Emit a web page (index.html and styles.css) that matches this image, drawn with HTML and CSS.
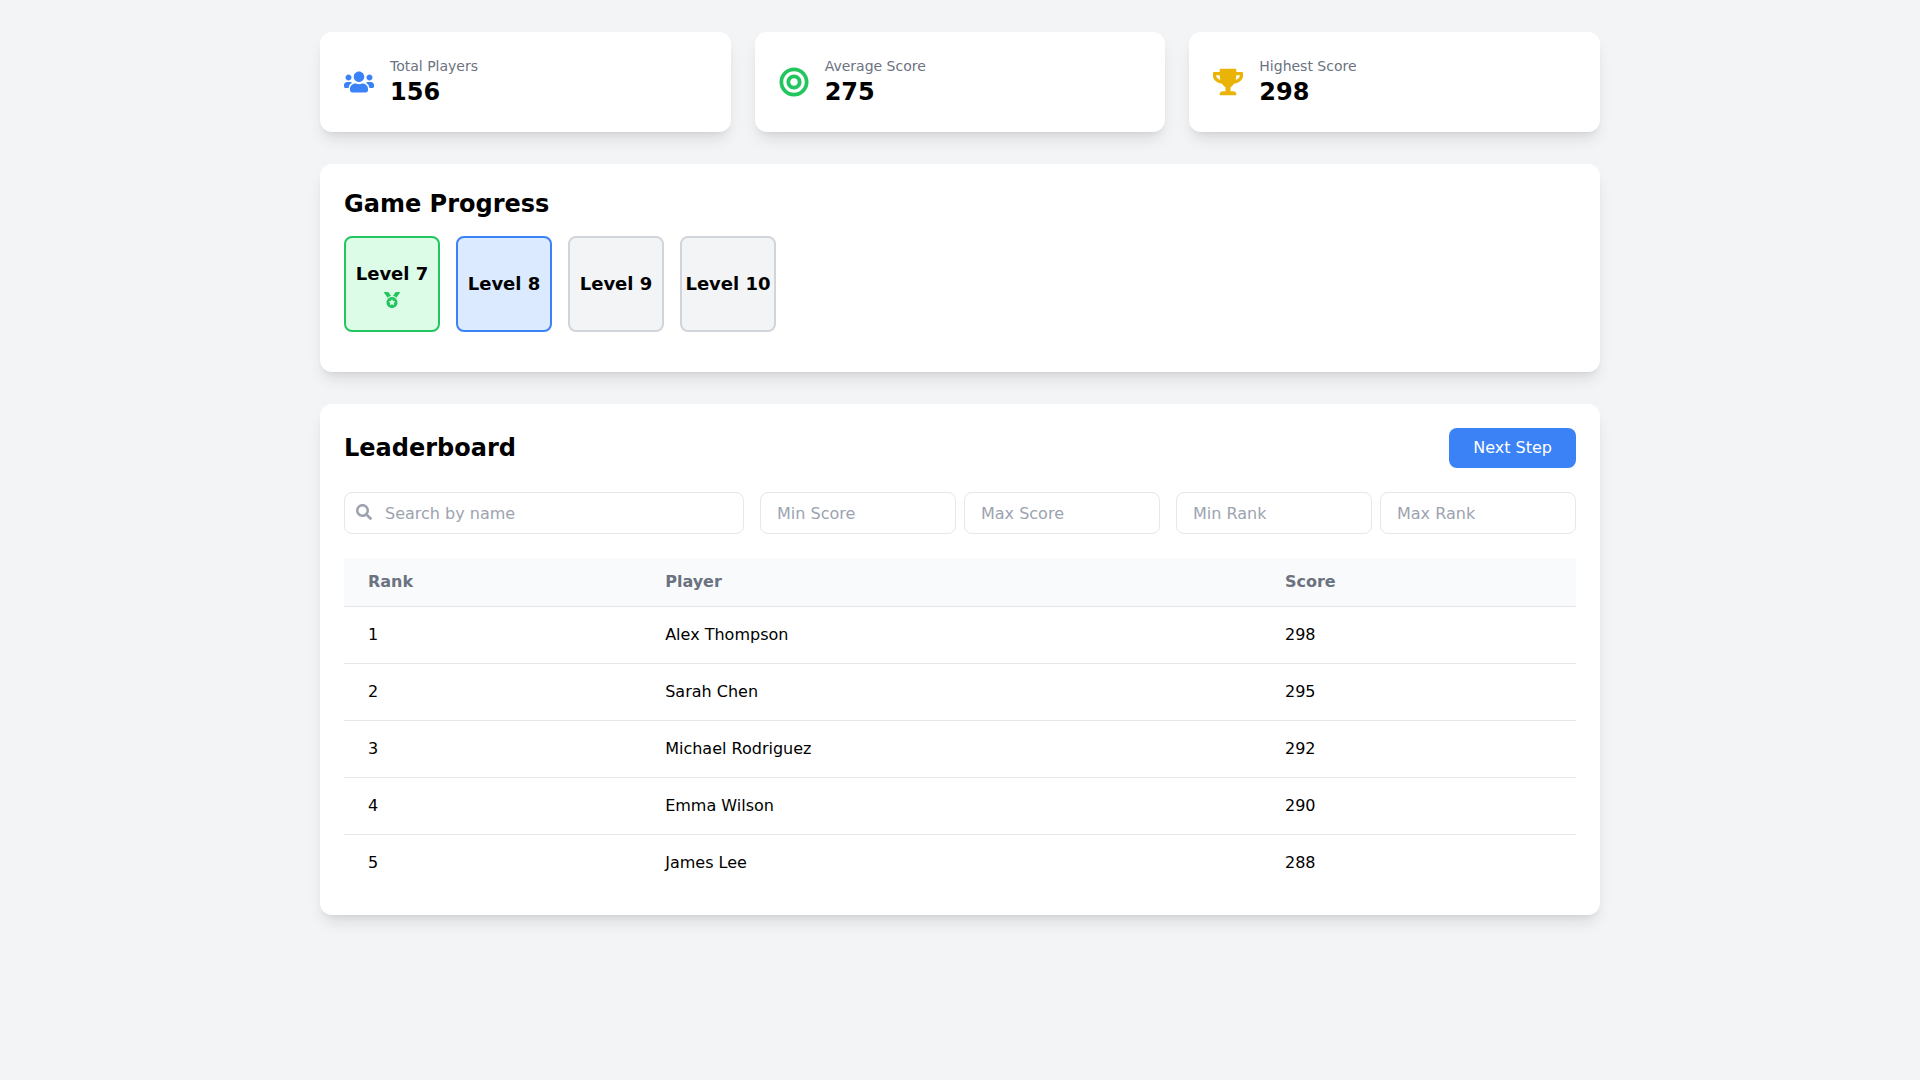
FILE: index.html
```html
<!DOCTYPE html>
<html lang="en">
<head>
  <meta charset="UTF-8">
  <meta name="viewport" content="width=device-width, initial-scale=1.0">
  <title>Leaderboard</title>
  <link rel="stylesheet" href="styles.css">
</head>
<body>
  <main class="container">
    <!-- Stats -->
    <section class="stats">
      <div class="card stat">
        <svg class="stat-icon blue" viewBox="0 0 640 512" aria-hidden="true"><path d="M96 224c35.3 0 64-28.7 64-64s-28.7-64-64-64-64 28.7-64 64 28.7 64 64 64zm448 0c35.3 0 64-28.7 64-64s-28.7-64-64-64-64 28.7-64 64 28.7 64 64 64zm32 32h-64c-17.6 0-33.5 7.1-45.1 18.6 40.3 22.1 68.9 62 75.1 109.4h66c17.7 0 32-14.3 32-32v-32c0-35.3-28.7-64-64-64zm-256 0c61.9 0 112-50.1 112-112S381.9 32 320 32 208 82.1 208 144s50.1 112 112 112zm76.8 32h-8.3c-20.8 10-43.9 16-68.5 16s-47.6-6-68.5-16h-8.3C179.6 288 128 339.6 128 403.2V432c0 26.5 21.5 48 48 48h288c26.5 0 48-21.5 48-48v-28.8c0-63.6-51.6-115.2-115.2-115.2zm-223.7-13.4C161.5 263.1 145.6 256 128 256H64c-35.3 0-64 28.7-64 64v32c0 17.7 14.3 32 32 32h65.9c6.3-47.4 34.9-87.3 75.2-109.4z"/></svg>
        <div>
          <p class="stat-label">Total Players</p>
          <p class="stat-value">156</p>
        </div>
      </div>
      <div class="card stat">
        <svg class="stat-icon green" viewBox="0 0 496 512" aria-hidden="true"><path d="M248 8C111.03 8 0 119.03 0 256s111.03 248 248 248 248-111.03 248-248S384.97 8 248 8zm0 432c-101.69 0-184-82.29-184-184 0-101.69 82.29-184 184-184 101.69 0 184 82.29 184 184 0 101.69-82.29 184-184 184zm0-312c-70.69 0-128 57.31-128 128s57.31 128 128 128 128-57.31 128-128-57.31-128-128-128zm0 192c-35.29 0-64-28.71-64-64s28.71-64 64-64 64 28.71 64 64-28.71 64-64 64z"/></svg>
        <div>
          <p class="stat-label">Average Score</p>
          <p class="stat-value">275</p>
        </div>
      </div>
      <div class="card stat">
        <svg class="stat-icon yellow" viewBox="0 0 576 512" aria-hidden="true"><path d="M552 64H448V24c0-13.3-10.7-24-24-24H152c-13.3 0-24 10.7-24 24v40H24C10.7 64 0 74.7 0 88v56c0 35.7 22.5 72.4 61.9 100.7 31.5 22.7 69.8 37.1 110 41.7C203.3 338.5 240 360 240 360v72h-48c-35.3 0-64 20.7-64 56v12c0 6.6 5.4 12 12 12h296c6.6 0 12-5.4 12-12v-12c0-35.3-28.7-56-64-56h-48v-72s36.7-21.5 68.1-73.6c40.3-4.6 78.6-19 110-41.7 39.3-28.3 61.9-65 61.9-100.7V88c0-13.3-10.7-24-24-24zM99.3 192.8C74.9 175.2 64 155.6 64 144v-16h64.2c1 32.6 5.8 61.2 12.8 86.2-15.1-5.2-29.2-12.4-41.7-21.4zM512 144c0 16.1-17.7 36.1-35.3 48.8-12.5 9-26.7 16.2-41.8 21.4 7-25 11.8-53.6 12.8-86.2H512v16z"/></svg>
        <div>
          <p class="stat-label">Highest Score</p>
          <p class="stat-value">298</p>
        </div>
      </div>
    </section>

    <!-- Game progress -->
    <section class="card">
      <h2 class="progress-title">Game Progress</h2>
      <div class="levels">
        <div class="level done">
          <span>Level 7</span>
          <svg class="medal" viewBox="0 0 512 512" aria-hidden="true"><path d="M223.75 130.75L154.62 15.54A31.997 31.997 0 0 0 127.18 0H16.03C3.08 0-4.5 14.57 2.92 25.18l111.27 158.96c29.72-27.77 67.52-46.83 109.56-53.39zM495.97 0H384.82c-11.24 0-21.66 5.9-27.44 15.54l-69.13 115.21c42.04 6.56 79.84 25.62 109.56 53.38L509.08 25.18C516.5 14.57 508.92 0 495.97 0zM256 160c-97.2 0-176 78.8-176 176s78.8 176 176 176 176-78.8 176-176-78.8-176-176-176zm92.52 157.26l-37.93 36.96 8.97 52.22c1.6 9.36-8.26 16.51-16.65 12.09L256 393.88l-46.9 24.65c-8.4 4.45-18.25-2.74-16.65-12.09l8.97-52.22-37.93-36.96c-6.82-6.64-3.05-18.23 6.35-19.59l52.43-7.64 23.43-47.52c2.11-4.28 6.19-6.39 10.28-6.39 4.11 0 8.22 2.14 10.33 6.39l23.43 47.52 52.43 7.64c9.4 1.36 13.17 12.95 6.35 19.59z"/></svg>
        </div>
        <div class="level current"><span>Level 8</span></div>
        <div class="level"><span>Level 9</span></div>
        <div class="level"><span>Level 10</span></div>
      </div>
    </section>

    <!-- Leaderboard -->
    <section class="card">
      <div class="board-header">
        <h2>Leaderboard</h2>
        <button class="next-button" type="button">Next Step</button>
      </div>

      <div class="filters">
        <div class="search">
          <svg class="search-icon" viewBox="0 0 512 512" aria-hidden="true"><path d="M505 442.7L405.3 343c-4.5-4.5-10.6-7-17-7H372c27.6-35.3 44-79.7 44-128C416 93.1 322.9 0 208 0S0 93.1 0 208s93.1 208 208 208c48.3 0 92.7-16.4 128-44v16.3c0 6.4 2.5 12.5 7 17l99.7 99.7c9.4 9.4 24.6 9.4 33.9 0l28.3-28.3c9.4-9.4 9.4-24.6.1-34zM208 336c-70.7 0-128-57.2-128-128 0-70.7 57.2-128 128-128 70.7 0 128 57.2 128 128 0 70.7-57.2 128-128 128z"/></svg>
          <input class="field search-field" type="text" placeholder="Search by name" aria-label="Search by name">
        </div>
        <div class="range">
          <input class="field" type="number" placeholder="Min Score" aria-label="Min Score">
          <input class="field" type="number" placeholder="Max Score" aria-label="Max Score">
        </div>
        <div class="range">
          <input class="field" type="number" placeholder="Min Rank" aria-label="Min Rank">
          <input class="field" type="number" placeholder="Max Rank" aria-label="Max Rank">
        </div>
      </div>

      <table class="board">
        <thead>
          <tr><th>Rank</th><th>Player</th><th>Score</th></tr>
        </thead>
        <tbody>
          <tr><td>1</td><td>Alex Thompson</td><td>298</td></tr>
          <tr><td>2</td><td>Sarah Chen</td><td>295</td></tr>
          <tr><td>3</td><td>Michael Rodriguez</td><td>292</td></tr>
          <tr><td>4</td><td>Emma Wilson</td><td>290</td></tr>
          <tr><td>5</td><td>James Lee</td><td>288</td></tr>
        </tbody>
      </table>
    </section>
  </main>
</body>
</html>
```
FILE: styles.css
```css
* {
  box-sizing: border-box;
}

body {
  margin: 0;
  min-height: 100vh;
  padding: 32px;
  background-color: #f3f4f6;
  color: #000;
  font-family: "DejaVu Sans", sans-serif;
  font-size: 16px;
  line-height: 24px;
}

h2,
p {
  margin: 0;
}

h2 {
  font-size: 24px;
  line-height: 32px;
  font-weight: bold;
}

.container {
  display: flex;
  flex-direction: column;
  gap: 32px;
  max-width: 1280px;
  margin: 0 auto;
}

.card {
  padding: 24px;
  background-color: #fff;
  border-radius: 12px;
  box-shadow: 0 10px 15px -3px rgba(0, 0, 0, 0.1), 0 4px 6px -4px rgba(0, 0, 0, 0.1);
}

/* Stats */
.stats {
  display: grid;
  grid-template-columns: repeat(3, 1fr);
  gap: 24px;
}

.stat {
  display: flex;
  align-items: center;
  gap: 16px;
}

.stat-icon {
  width: 30px;
  height: 30px;
  fill: currentColor;
}

.blue {
  color: #3b82f6;
}

.green {
  color: #22c55e;
}

.yellow {
  color: #eab308;
}

.stat-label {
  color: #6b7280;
  font-size: 14px;
  line-height: 20px;
}

.stat-value {
  font-size: 24px;
  line-height: 32px;
  font-weight: bold;
}

/* Game progress */
.progress-title {
  margin-bottom: 16px;
}

.levels {
  display: flex;
  gap: 16px;
  padding-bottom: 16px;
  overflow-x: auto;
}

.level {
  display: flex;
  flex-direction: column;
  flex-shrink: 0;
  align-items: center;
  justify-content: center;
  gap: 4px;
  width: 96px;
  height: 96px;
  border: 2px solid #d1d5db;
  border-radius: 8px;
  background-color: #f3f4f6;
  font-size: 18px;
  line-height: 28px;
  font-weight: bold;
}

.level.done {
  border-color: #22c55e;
  background-color: #dcfce7;
}

.level.current {
  border-color: #3b82f6;
  background-color: #dbeafe;
}

.medal {
  width: 16px;
  height: 16px;
  fill: #22c55e;
}

/* Leaderboard */
.board-header {
  display: flex;
  align-items: center;
  justify-content: space-between;
  margin-bottom: 24px;
}

.next-button {
  padding: 8px 24px;
  border: 0;
  border-radius: 8px;
  background-color: #3b82f6;
  color: #fff;
  font: inherit;
  cursor: pointer;
}

.next-button:hover {
  background-color: #2563eb;
}

.filters {
  display: grid;
  grid-template-columns: repeat(3, 1fr);
  gap: 16px;
  margin-bottom: 24px;
}

.search {
  position: relative;
}

/* sits inside the search field */
.search-icon {
  position: absolute;
  top: 12px;
  left: 12px;
  width: 16px;
  height: 16px;
  fill: #9ca3af;
}

.range {
  display: flex;
  gap: 8px;
}

.field {
  width: 100%;
  min-width: 0;
  height: 42px;
  padding: 8px 16px;
  border: 1px solid #e5e7eb;
  border-radius: 8px;
  background-color: #fff;
  color: #000;
  font: inherit;
  line-height: normal;
}

.search-field {
  padding-left: 40px;
}

.field::placeholder {
  color: #9ca3af;
}

.board {
  width: 100%;
  border-collapse: collapse;
  text-align: left;
}

.board th {
  padding: 12px 24px;
  background-color: #f9fafb;
  color: #6b7280;
}

.board td {
  padding: 16px 24px;
}

.board tbody tr {
  border-top: 1px solid #e5e7eb;
}
```
